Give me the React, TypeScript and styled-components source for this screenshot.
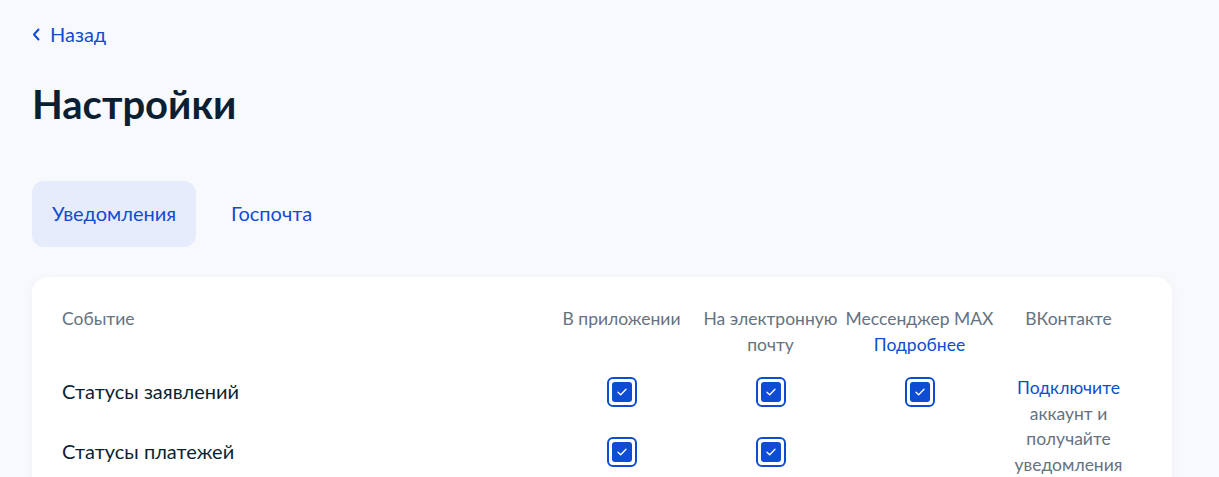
import React from 'react'
import styled, {createGlobalStyle} from 'styled-components'

const GlobalStyle = createGlobalStyle`
  html, body {
    margin: 0;
    padding: 0;
    background: #f8f9fd;
    font-family: Lato, "Noto Sans", sans-serif;
    color: #0b1f33;
  }
`

const Page = styled.div`
  padding: 22px 47px 0 32px;
`

const BackLink = styled.a`
  display: inline-flex;
  align-items: center;
  gap: 9px;
  font-size: 20px;
  line-height: 24px;
  color: #0d4cd3;
  text-decoration: none;
  cursor: pointer;
`

const Title = styled.h1`
  margin: 34px 0 0;
  font-size: 40px;
  line-height: 48px;
  font-weight: 700;
  color: #0b1f33;
`

const Tabs = styled.div`
  display: flex;
  gap: 15px;
  margin-top: 53px;
`

const Tab = styled.button<{$active?: boolean}>`
  height: 66px;
  padding: 0 20px 3px;
  border: none;
  border-radius: 12px;
  background: ${p => (p.$active ? '#e6ecfc' : 'transparent')};
  font-family: inherit;
  font-size: 20px;
  color: #0d4cd3;
  cursor: pointer;
`

const Card = styled.div`
  margin-top: 30px;
  background: #ffffff;
  border-radius: 16px;
  box-shadow: 0 2px 12px rgba(11, 31, 51, 0.04);
  padding: 29px 29px 30px 30px;
`

const Table = styled.div`
  display: grid;
  grid-template-columns: 1fr repeat(4, 149px);
`

const HeadCell = styled.div<{$left?: boolean}>`
  padding-bottom: 4px;
  font-size: 17.5px;
  line-height: 26px;
  color: #66727f;
  text-align: ${p => (p.$left ? 'left' : 'center')};
`

const NoWrap = styled.span`
  white-space: nowrap;
`

const Link = styled.a`
  display: block;
  color: #0d4cd3;
  text-decoration: none;
  cursor: pointer;
`

const InlineLink = styled.a`
  color: #0d4cd3;
  text-decoration: none;
  cursor: pointer;
`

const EventCell = styled.div`
  display: flex;
  align-items: center;
  height: 60px;
  padding-bottom: 2px;
  box-sizing: border-box;
  font-size: 20px;
  line-height: 24px;
  color: #0b1f33;
`

const CheckCell = styled.div`
  display: flex;
  align-items: center;
  justify-content: center;
  height: 60px;
`

const VkCell = styled.div`
  grid-row: span 2;
  padding-top: 13px;
  font-size: 17.5px;
  line-height: 25.7px;
  color: #66727f;
  text-align: center;
`

const CheckOuter = styled.span`
  box-sizing: border-box;
  display: flex;
  align-items: center;
  justify-content: center;
  width: 30px;
  height: 30px;
  border: 2px solid #0d4cd3;
  border-radius: 6px;
  cursor: pointer;
`

const CheckInner = styled.span`
  display: flex;
  align-items: center;
  justify-content: center;
  width: 20px;
  height: 20px;
  border-radius: 3px;
  background: #0d4cd3;
`

const Checkbox = () => (
  <CheckOuter role="checkbox" aria-checked="true">
    <CheckInner>
      <svg width="10" height="8" viewBox="0 0 10 8" fill="none">
        <path d="M1 4.2L3.7 6.8L9 1.2" stroke="#fff" strokeWidth="1.3" strokeLinecap="round" strokeLinejoin="round" />
      </svg>
    </CheckInner>
  </CheckOuter>
)

const rows = [
  {title: 'Статусы заявлений', app: true, mail: true, max: true},
  {title: 'Статусы платежей', app: true, mail: true, max: false},
]

export default function App() {
  return (
    <>
      <GlobalStyle />
      <Page>
        <BackLink>
          <svg width="9" height="13" viewBox="0 0 9 13" fill="none">
            <path d="M6.5 1.5L2 6.5L6.5 11.5" stroke="#0d4cd3" strokeWidth="2" strokeLinecap="round" strokeLinejoin="round" />
          </svg>
          Назад
        </BackLink>
        <Title>Настройки</Title>
        <Tabs>
          <Tab $active>Уведомления</Tab>
          <Tab>Госпочта</Tab>
        </Tabs>
        <Card>
          <Table>
            <HeadCell $left>Событие</HeadCell>
            <HeadCell>В приложении</HeadCell>
            <HeadCell>На электронную почту</HeadCell>
            <HeadCell>
              <NoWrap>Мессенджер MAX</NoWrap>
              <Link>Подробнее</Link>
            </HeadCell>
            <HeadCell>ВКонтакте</HeadCell>
            {rows.map((r, i) => (
              <React.Fragment key={r.title}>
                <EventCell>{r.title}</EventCell>
                <CheckCell>{r.app && <Checkbox />}</CheckCell>
                <CheckCell>{r.mail && <Checkbox />}</CheckCell>
                <CheckCell>{r.max && <Checkbox />}</CheckCell>
                {i === 0 && (
                  <VkCell>
                    <InlineLink>Подключите</InlineLink> аккаунт и получайте уведомления
                  </VkCell>
                )}
              </React.Fragment>
            ))}
          </Table>
        </Card>
      </Page>
    </>
  )
}
